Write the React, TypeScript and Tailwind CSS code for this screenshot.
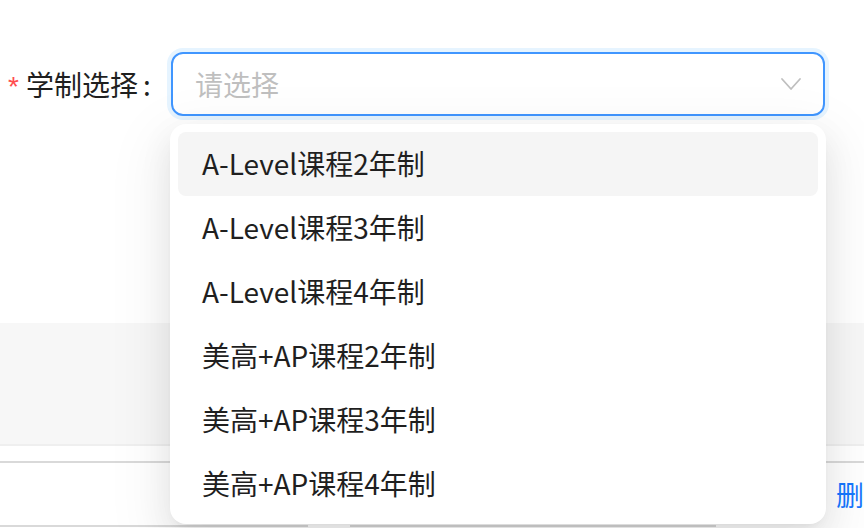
const options = [
  "A-Level课程2年制",
  "A-Level课程3年制",
  "A-Level课程4年制",
  "美高+AP课程2年制",
  "美高+AP课程3年制",
  "美高+AP课程4年制",
];

function ChevronDown() {
  return (
    <svg width="24" height="24" viewBox="0 0 24 24" fill="none">
      <polyline
        points="3,7 12,17 21,7"
        stroke="#bfbfbf"
        strokeWidth={1.8}
        strokeLinecap="round"
        strokeLinejoin="round"
      />
    </svg>
  );
}

export default function App() {
  return (
    <div
      className="relative w-[864px] h-[528px] overflow-hidden bg-white text-[#1f1f1f]"
      style={{ fontFamily: '"Noto Sans CJK SC", "Noto Sans", sans-serif' }}
    >
      {/* Form row */}
      <div className="flex items-start pt-[52px] h-[323px]">
        <div className="flex items-center w-[171px] h-[64px] pl-[8px]">
          <span
            className="text-[28px] text-[#ff4d4f] leading-none mr-[7px] mt-[6px]"
            style={{ fontFamily: '"Liberation Sans", sans-serif' }}
          >
            *
          </span>
          <span className="text-[28px] leading-none">学制选择</span>
          <span className="text-[28px] leading-none ml-[5px]">:</span>
        </div>
        <div className="flex items-center justify-between w-[654px] h-[64px] border-2 border-[#4096ff] rounded-[12px] pl-[22px] pr-[20px] shadow-[0_0_0_4px_rgba(5,145,255,0.1)]">
          <span className="text-[28px] text-[#bfbfbf] leading-none">请选择</span>
          <ChevronDown />
        </div>
      </div>

      {/* Underlying page content */}
      <div className="h-[123px] bg-[#f7f7f7] border-b-2 border-[#efefef]" />
      <div className="h-[15px]" />
      <div className="flex h-[64px] border-t-2 border-[#d9d9d9]">
        <div className="flex-1" />
        <div className="flex items-center">
          <span className="text-[28px] text-[#1677ff] leading-none">删</span>
        </div>
      </div>
      <div className="flex gap-[42px]">
        <div className="w-[308px] h-[4px] border-t-2 border-[#d9d9d9]" />
        <div className="w-[366px] h-[4px] border-t-2 border-[#d9d9d9]" />
      </div>

      {/* Dropdown overlay */}
      <div className="absolute left-[170px] top-[124px] w-[656px] bg-white rounded-[16px] p-[8px] shadow-[0_12px_32px_0_rgba(0,0,0,0.08),0_6px_12px_-8px_rgba(0,0,0,0.12),0_18px_56px_16px_rgba(0,0,0,0.05)]">
        {options.map((opt, i) => (
          <div
            key={opt}
            className={
              "flex items-center h-[64px] px-[24px] pb-[3px] rounded-[8px] text-[28px] " +
              (i === 0 ? "bg-[#f5f5f5]" : "")
            }
          >
            {opt}
          </div>
        ))}
      </div>
    </div>
  );
}
